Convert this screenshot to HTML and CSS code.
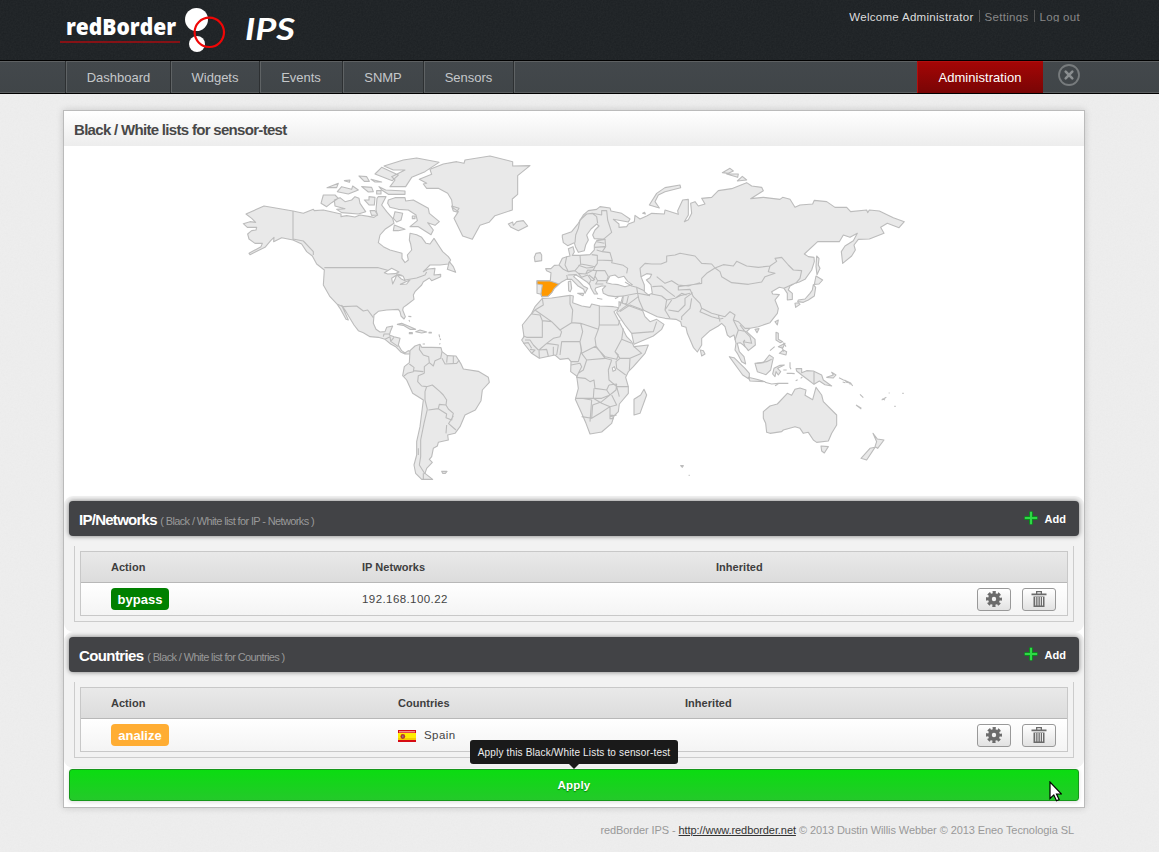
FILE: index.html
```html
<!DOCTYPE html>
<html lang="en">
<head>
<meta charset="utf-8">
<title>redBorder IPS</title>
<link rel="stylesheet" href="styles.css">
</head>
<body>
<svg class="defs" width="0" height="0" aria-hidden="true">
  <symbol id="gear" viewBox="0 0 16 16"><g fill="none" stroke="#6b6b6b"><circle cx="8" cy="8" r="4.100" stroke-width="3.800"/><circle cx="8" cy="8" r="6.600" stroke-width="2.800" stroke-dasharray="3.100 2.084" stroke-dashoffset="1.550"/></g></symbol>
  <symbol id="trash" viewBox="0 0 16 16"><path fill="#6b6b6b" fill-rule="evenodd" d="M5 0h6v2.500h4.500v1.700H.5V2.500H5zM6.300 1.300v1.200h3.400V1.300zM2.500 5.500h11V16h-11zM4.200 6v8.500h1V6zM6.500 6v8.500h1V6zM8.800 6v8.500h1V6zM11 6v8.500h1V6z"/></symbol>
  <symbol id="plus" viewBox="0 0 14 14"><path fill="#0c8a1e" d="M5 .5h4V5h4.500v4H9v4.500H5V9H.5V5H5z"/><path fill="#2fd846" d="M6 .8h2V6h5.200v2H8v5.200H6V8H.8V6H6z"/></symbol>
</svg>

<header class="header">
  <div class="header-inner">
    <svg class="logo" viewBox="0 0 250 60" width="250" height="60">
      <text x="6" y="34.500" class="logo-name" textLength="110" lengthAdjust="spacingAndGlyphs">redBorder</text>
      <path d="M0 42h120" stroke="#a80d10" stroke-width="1.700"/>
      <circle cx="136.500" cy="19.500" r="11.500" fill="#fff"/><circle cx="137" cy="44" r="8" fill="#fff"/>
      <circle cx="149.300" cy="32.300" r="14.700" fill="none" stroke="#f00606" stroke-width="2.200"/>
      <text x="185" y="39.500" class="logo-ips" textLength="50" lengthAdjust="spacingAndGlyphs">IPS</text>
    </svg>
    <div class="user-menu"><span class="welcome">Welcome Administrator</span><a class="menu-link">Settings</a><a class="menu-link logout">Log out</a></div>
  </div>
</header>
<nav class="nav">
  <div class="nav-inner">
    <a class="tab dashboard">Dashboard</a><a class="tab widgets">Widgets</a><a class="tab events">Events</a><a class="tab snmp">SNMP</a><a class="tab sensors">Sensors</a><span class="tab-end"></span>
    <a class="admin">Administration</a>
    <svg class="close" width="24" height="24" viewBox="0 0 24 24" fill="none"><circle cx="12" cy="12" r="10" stroke="#777b7d" stroke-width="1.800"/><path d="M8.700 8.700l6.600 6.600m0-6.600l-6.600 6.600" stroke="#8a8e90" stroke-width="2.600" stroke-linecap="round"/></svg>
  </div>
</nav>

<main class="panel">
  <h1 class="title">Black / White lists for sensor-test</h1>
  <svg class="map" viewBox="64 146 1020 350" width="1020" height="350">
    <!-- North America -->
    <g transform="translate(235 150) scale(.33333)">
      <path d="M33 192L87 168 174 183 205 190 235 178 238 182 265 180 318 192 318 200 335 197 360 201 375 195 405 200 417 202 427 195 423 180 426 145 430 140 453 140 440 165 455 185 473 205 477 220 465 228 450 238 435 255 430 278 445 290 465 300 501 310 501 325 510 338 520 330 517 315 530 300 527 282 523 270 525 250 545 254 560 262 573 280 585 282 597 265 610 285 623 305 640 320 647 330 640 342 615 345 585 345 575 355 565 365 580 357 600 355 597 375 617 373 617 380 590 392 583 384 577 388 565 395 560 405 540 425 535 435 537 448 515 465 505 472 503 480 511 500 507 507 498 498 495 485 490 478 455 480 430 484 417 495 415 520 423 538 435 546 450 545 455 532 473 528 467 542 463 555 477 560 495 565 490 585 500 602 510 609 520 602 528 604 525 612 510 612 497 606 482 590 467 582 450 568 430 562 405 560 385 548 370 542 357 525 342 500 330 480 320 466 340 510 333 508 315 475 307 463 285 440 265 405 268 360 245 342 232 318 215 305 200 282 174 270 140 263 116 275 117 262 107 272 90 292 45 314 42 310 78 290 82 280 60 280 42 267 38 252 50 242 63 240 65 232 37 232 25 221 45 215 62 217 50 205z"/>
      <path class="b" d="M174 183V270M174 267L205 273 235 305 235 315M268 353H430L455 360 480 370 500 376 510 390 545 384 570 375 575 366M307 463L325 470 365 468 385 483 398 480 415 503M445 560L447 552 463 552M450 568L465 560 467 574 490 590M467 574L477 562"/>
      <path d="M258 160L265 135 300 135 310 145 290 158 275 170zM298 150L315 143 330 155 350 150 360 140 372 145 375 160 392 185 370 192 320 188 305 178 330 176 300 168zM276 113L310 100 305 113zM307 125L320 110 350 118 353 108 370 120 340 132zM328 92L345 90 343 97zM372 78L395 80 403 94 388 94zM380 110L410 112 415 125 400 126zM408 88L440 96 420 96zM420 72L440 52 490 75 472 92zM447 48L505 30 545 24 612 37 570 65 530 82 512 110H465L480 90 470 80 510 60 475 60zM432 110L452 120 510 123 510 133 460 133 440 120zM388 150L402 150 402 140 420 142 418 165 402 165zM460 150L480 143 510 143 512 153 535 150 580 175 583 190 613 215 600 226 578 218 595 240 588 254 550 230 525 230 547 212 543 195 520 180 490 178 465 172 458 160zM480 185L503 190 498 210 485 216 475 205zM478 225L510 238 490 242 475 242zM425 122h13v10h-13zM405 182L420 182 428 195 410 196zM532 198h8v8h-8zM643 335L637 358 662 367 655 350z"/>
      <path class="sea" d="M448 368L470 355 492 366 480 371 458 372zM473 402L470 385 485 375 480 388zM485 374L505 379 510 392 499 387zM496 403L525 390 515 402z"/>
      <path d="M553 88L590 73 585 58 625 42 665 35 687 40 690 30 765 18 833 35 833 48 885 47 848 77 848 133 832 147 832 180 780 197 762 217 735 226 712 268 683 258 657 205 670 185 653 173 650 150 638 130 610 115 575 115 565 102 575 100zM650 168L672 175 665 186 655 183zM820 222L833 216 835 226 845 215 865 212 878 228 850 242 828 232z"/>
    </g>
    <!-- South America and the Caribbean -->
    <g transform="translate(370 310) scale(.33333)">
      <path d="M120 122L135 108 150 103 155 112 185 112 213 113 216 125 232 137 258 138 272 160 280 177 325 184 355 202 358 217 337 240 333 272 316 300 285 315 270 350 255 370 233 375 235 390 205 397 202 408 190 415 185 440 178 448 187 457 170 475 165 490 188 508 155 508 137 490 132 465 140 435 140 395 150 350 160 270 128 250 110 210 98 197 103 170 118 158z"/>
      <path class="b" d="M150 105L148 118 160 135 176 140 178 158 163 170 163 190M178 158L190 168 195 152 212 145 216 125M216 145L225 162 260 160 268 150M232 137L230 158M250 138V160M118 162L132 172 130 185 112 190 102 198M130 182L160 185M163 190L145 197 143 215 155 228 170 230 165 245 165 270 172 298M170 230L187 225 210 245 220 255 230 270 228 285 208 283 205 296 175 300M228 285L235 297 250 310 245 330 228 323 230 312 205 296M235 340L258 360M230 345L228 370M250 318L235 342M172 298L162 340 152 390 152 440 148 465 165 492M145 415v20M160 490v18"/>
      <path d="M82 43L95 40 120 50 137 58 120 58 100 46zM137 65L150 60 170 66 155 69zM118 68h9v3h-9zM177 67h7v2h-7zM115 19l9 1M117 30l2 5M207 73l2 9M210 85l2 5M208 103l3-3M158 102h7M215 484h16l-5 6h-8z"/>
    </g>
    <!-- Europe and Asia -->
    <g transform="translate(515 150) scale(.33333)">
      <path d="M142 262L142 255 170 245 190 220 205 195 220 182 245 178 255 170 285 174 288 183 320 190 345 207 340 216 295 208 312 222 312 232 335 230 340 222 358 215 360 196 375 207 395 198 410 190 448 192 450 180 490 193 488 182 503 150 520 148 520 195 508 215 520 209 530 190 527 160 540 155 550 168 570 162 560 145 590 142 610 122 650 116 695 98 710 108 740 112 745 122 707 146 745 142 795 148 803 142 825 148 840 172 855 165 893 162 898 151 935 155 960 172 995 172 1007 185 1055 180 1058 188 1063 180 1093 183 1135 203 1168 215 1152 233 1117 220 1097 232 1107 250 1063 267 1030 268 1017 285 1021 300 1010 318 983 340 979 305 990 288 1015 272 1027 250 1005 262 985 255 973 275 908 275 868 312 880 320 897 322 898 335 890 360 870 388 853 396 840 400 825 408 820 420 832 430 832 448 817 450 817 430 807 415 793 412 770 425 773 432 793 434 780 450 790 475 787 490 765 518 730 530 705 535 695 545 720 568 721 585 700 602 695 595 685 585 675 578 667 580 673 605 687 620 692 642 680 635 667 610 660 600 663 580 657 555 645 562 637 555 630 530 620 520 610 528 585 542 560 565 560 585 547 606 535 592 517 550 513 532 500 528 497 515 483 508 450 505 427 500 405 490 385 480 365 487 312 475 322 460 325 438 300 440 280 437 265 430 262 418 272 408 260 408 242 414 240 420 248 432 238 432 228 415 225 405 215 395 195 382 182 374 176 380 190 392 205 408 218 415 210 430 206 418 188 407 170 388 155 388 140 396 132 402 118 415 110 428 100 438 80 440 78 433 66 430 66 392 106 392 108 368 95 362 92 356 108 356 118 346 132 345 142 325 155 320 165 318 160 296 174 290 178 306 172 316 195 316 225 314 238 300 238 285 245 272 270 268 238 266 233 255 240 240 252 228 245 222 228 237 215 255 220 270 212 285 208 302 190 307 182 292 178 278 158 287 145 278z"/>
      <path class="spain" d="M66 393L105 393 132 402 118 415 110 428 100 438 80 440 78 430 82 405 66 402z"/>
      <path class="sea" d="M274 398L285 378 300 375 310 383 327 379 338 394 352 404 330 410 310 404 290 402zM378 380L395 371 410 373 405 383 394 390 408 405 412 430 400 435 388 425 388 405z"/>
      <path class="b" d="M180 278L182 255 190 235 195 210 215 192 232 190 245 200 248 220M232 190L260 195 260 182 275 182 278 210 290 247 265 268M270 268L272 290 262 305 245 300M245 275L268 280M238 292L270 290M195 316L197 342 215 345 240 350 247 340 247 316 230 314M247 330L292 332M262 305L285 308 292 332 290 338 325 346 338 355 335 370M155 320L150 345 160 365 180 362 197 342M132 345L145 358 160 365M180 362L190 370 212 372 235 360 240 350M155 375L158 388M158 375L185 374M190 346L215 354 235 352M190 370L200 382 218 375 228 390 222 402M212 372L218 360 245 362 240 378 235 392 228 390M245 362L270 362 280 380 275 392 248 392 240 378M248 392L242 402 265 402M222 375L240 390M330 396L350 408 365 412 368 430 325 438M365 412L388 422M368 430L372 450 385 480M340 438L335 460 322 465M368 430L405 437M410 432L440 438 455 450 450 480 465 505M455 450L480 445 495 437 525 430M412 410L440 408 460 425 480 440M425 380L450 400 470 392 490 405 520 408 555 398M378 380L375 355 390 340 410 342 438 342 455 335 455 318 480 315 495 310 540 318 560 340 590 342 600 354 575 370 560 385 560 400 525 405M600 354L625 344 655 348 665 334 695 348 730 352 765 348 785 334 780 325 800 322 820 345 835 360 860 362 855 385 842 400M600 354L615 365 620 380 650 398 700 403 740 396 750 380 780 370 760 365 765 348M807 415L835 402M525 405L490 410 490 420 525 418 535 440 555 460 560 475 590 490 630 500 645 485 660 495 655 510 670 515M533 428L510 445 510 465 490 485 460 480M530 445L525 475 500 500 500 510M560 475L555 485 590 500 615 507 625 505M610 495L615 515M470 450L450 480M480 445L500 430 515 435M655 510L670 540 660 570M670 515L690 535 705 535M675 525L690 545 705 560 710 580 685 575 690 590M670 540L695 545M685 575L690 570"/>
      <path d="M403 165L425 130 450 113 495 105 497 113 450 125 430 135 420 155 433 174zM383 190l6-3 2 5zM58 322L63 310 76 308 80 315 80 332 60 335zM160 395l7-2 3 22-4 10-5-3zM188 430l18 0-2 7zM246 445l16 3M300 446l10-5"/>
      <path d="M622 68L645 55 655 63 640 70zM635 72L670 72 668 82zM667 93L682 79 695 90zM905 318L912 325 910 345 915 355 906 374 903 350zM898 403L903 378 923 390 912 402zM895 404L902 412 898 438 880 450 865 457 848 455 850 450 870 447 885 430 892 420zM840 460L850 458 855 463 842 472z"/>
    </g>
    <!-- Africa and Arabia -->
    <g transform="translate(510 290) scale(.33333)">
      <path d="M97 25L125 24 180 16 190 18 188 38 215 48 240 52 245 42 270 48 310 50 320 52 327 55 312 65 325 90 335 110 350 140 365 155 372 170 415 165 405 190 370 230 355 245 347 262 355 290 355 310 328 342 325 365 312 378 305 400 275 426 240 432 228 400 215 370 196 328 205 295 200 258 182 245 183 215 175 205 150 208 135 195 88 205 65 190 45 165 35 150 42 140 37 105 65 70 75 50zM372 375L372 328 392 315 402 298 410 315 390 370z"/>
      <path d="M327 35L365 50 398 62 405 80 420 95 440 88 462 103 455 118 430 138 372 163 365 130 345 105 320 68 327 50z"/>
      <path class="b" d="M97 25L100 45 75 60 65 72 90 75 97 92 97 142 50 142 40 138M75 60L125 95 150 120 185 98 188 60 180 42 180 18M97 92L125 95M185 98L212 100 265 118 268 105 268 48M268 105H325L330 90M155 125L150 140 130 145 110 160 87 180 88 205M150 120L155 125M212 100L218 125 210 155 155 155 150 195M87 180L110 178 115 198M110 160L145 165 140 195M130 170V195M45 150L60 150 70 165 85 180M40 160L55 158 65 175M60 178L75 180 65 190M265 118L255 145 258 168 215 190 210 155M210 155L215 180 205 215 183 215M258 168L285 205 230 210 215 190M255 168L285 200 320 208 325 195 315 185 335 148 340 115M335 148L365 160M315 185L330 205 360 205 395 190 372 170M330 205L318 215 320 235 347 255M285 205L305 210 295 240 297 270 320 290 355 290M360 205L358 240M230 210L220 240 205 250 200 262 225 265 240 275 252 270 255 295 290 300 297 285M183 225L210 220 215 230 205 250M252 295L250 325 195 325M250 325L275 325 300 315 290 300M297 285L320 282 318 300 275 335 248 345 245 385 215 380M245 385L270 370 300 350 320 345 305 315M300 350L300 380 320 375M250 325L275 340 300 350M320 290L328 320M300 376h9v10h-9zM215 325L245 330 240 395M325 65L385 20M365 130L430 125 440 95M330 65L360 45 400 60M338 20L330 48"/>
      <path class="sea" d="M307 234l6-4 4 10-8 4z"/>
    </g>
    <!-- South-east Asia and Oceania -->
    <g transform="translate(650 290) scale(.33333)">
      <path d="M340 365L360 348 382 342 412 310 425 316 435 298 450 294 468 300 465 316 488 329 498 292 515 315 520 335 560 375 560 405 545 430 535 453 500 457 490 450 475 427 460 430 450 415 435 410 400 420 395 425 360 430 350 427 347 400 340 385zM513 468L535 470 523 489 515 483zM669 430L682 447 702 450 683 475 675 470 680 455zM633 505L660 475 675 472 650 510z"/>
      <path d="M238 200L252 203 285 235 298 250 298 268 278 255zM295 262L320 268 345 275 300 273zM315 220L340 218 358 195 370 203 362 240 348 254 322 245zM372 235L390 226 403 225 383 235 392 245 385 255 378 245 375 260 368 252zM378 127L385 130 385 148 398 155 390 158 378 150zM385 170L405 160 398 175zM388 190L400 180 410 185 408 195zM375 95L385 90 382 105zM151 180L160 182 165 192 155 198zM315 118l12-2-6 12zM438 236L455 236 455 248 470 242 490 243 515 255 520 270 545 288 525 284 508 273 492 283 475 270 455 255 440 243zM530 262L550 255 545 247 558 255 550 264z"/>
      <path class="b" d="M492 245V282M320 220L350 215 365 208M360 182l14-12M345 277l20 5 20-2 30 0M375 287l10-5M400 240h10M420 217v15l3 6M410 250h14l10 1M437 272l6-3M452 265l5-4M567 263l12 6 8 3 15 7 6 9M578 276l8 2M585 270l4 7 10 2 2 5M630 313l10 10M618 345l16 10M620 347l14 10M695 330l14-8M697 326l8 4M716 309h3M757 310h4M733 349h4M92 527h8l-3 5zM116 556h3M400 158l8 12M395 170l6 15"/>
    </g>
  </svg>

  <section class="block">
    <div class="bar"><h2 class="bar-title">IP/Networks <small class="bar-note">( Black / White list for IP - Networks )</small></h2><a class="add"><svg width="14" height="14"><use href="#plus"/></svg>Add</a></div>
    <div class="frame"><div class="table nets">
      <div class="row head"><span>Action</span><span>IP Networks</span><span>Inherited</span></div>
      <div class="row"><span><b class="tag bypass">bypass</b></span><span class="value">192.168.100.22</span><span></span><span class="tools"><button class="tool"><svg width="16" height="16"><use href="#gear"/></svg></button><button class="tool"><svg width="16" height="16"><use href="#trash"/></svg></button></span></div>
    </div></div>
  </section>
  <section class="block">
    <div class="bar"><h2 class="bar-title countries-title">Countries <small class="bar-note">( Black / White list for Countries )</small></h2><a class="add"><svg width="14" height="14"><use href="#plus"/></svg>Add</a></div>
    <div class="frame"><div class="table lands">
      <div class="row head"><span>Action</span><span>Countries</span><span>Inherited</span></div>
      <div class="row"><span><b class="tag analize">analize</b></span><span class="value country"><svg width="18" height="12" viewBox="0 0 18 12"><path fill="#d60b12" d="M0 0h18v12H0z"/><path fill="#f08a85" d="M1 1h16v1.500H1z"/><path fill="#ffed00" d="M0 3h18v7H0z"/><path fill="#f7c900" d="M0 8h18v2H0z"/><circle cx="4.800" cy="6.500" r="2.400" fill="#b8342c"/><path fill="#8a7a9a" d="M4 5.500h1.500v2H4z"/></svg>Spain</span><span></span><span class="tools"><button class="tool"><svg width="16" height="16"><use href="#gear"/></svg></button><button class="tool"><svg width="16" height="16"><use href="#trash"/></svg></button></span></div>
    </div></div>
  </section>
  <div class="apply">Apply
    <div class="tooltip">Apply this Black/White Lists to sensor-test</div>
    <svg class="cursor" width="13" height="21" viewBox="0 0 13 21"><path d="M1 1v16.500l3.800-3.600 2.700 5.800 2.600-1.200-2.600-5.500h5z" fill="#fff" stroke="#000" stroke-width="1.200"/></svg>
  </div>
</main>
<footer class="footer">redBorder IPS - <a class="site">http://www.redborder.net</a> © 2013 Dustin Willis Webber © 2013 Eneo Tecnologia SL</footer>
</body>
</html>
```

FILE: styles.css
```css
* { box-sizing: border-box; }
body {
  margin: 0;
  min-height: 852px;
  font-family: "Liberation Sans", Arial, sans-serif;
  font-size: 12px;
  color: #444;
  background: #eeeeee url("data:image/svg+xml,%3Csvg xmlns='http://www.w3.org/2000/svg' width='150' height='150'%3E%3Cfilter id='n'%3E%3CfeTurbulence type='fractalNoise' baseFrequency='.6' numOctaves='2' stitchTiles='stitch'/%3E%3CfeColorMatrix type='saturate' values='0'/%3E%3C/filter%3E%3Crect width='150' height='150' filter='url(%23n)' opacity='.06'/%3E%3C/svg%3E");
}
.defs { position: absolute; }
.header {
  height: 60px;
  background: #1c2023 url("data:image/svg+xml,%3Csvg xmlns='http://www.w3.org/2000/svg' width='150' height='150'%3E%3Cfilter id='n'%3E%3CfeTurbulence type='fractalNoise' baseFrequency='.6' numOctaves='2' stitchTiles='stitch'/%3E%3CfeColorMatrix type='saturate' values='0'/%3E%3C/filter%3E%3Crect width='150' height='150' filter='url(%23n)' opacity='.06'/%3E%3C/svg%3E");
}
.header-inner { display: flex; justify-content: space-between; width: 1020px; margin-left: 60px; }
.logo { display: block; }
.logo-name { font: 800 22px "Open Sans", sans-serif; fill: #fff; }
.logo-ips { font: italic 700 30px Lato, sans-serif; fill: #fff; }
.user-menu { display: flex; height: 22px; padding-top: 10px; line-height: 14px; font-size: 11.5px; letter-spacing: .3px; overflow: hidden; white-space: nowrap; }
.welcome { color: #ddd; padding-right: 5px; }
.menu-link { color: #888; border-left: 1px solid #555; padding: 0 5px; }
.logout { padding-right: 0; }

.nav { height: 34px; border-top: 1px solid #000; border-bottom: 1px solid #000; background: linear-gradient(#43484c, #404548); box-shadow: inset 0 1px #5e6163, inset 0 -1px #5a5d5f; }
.nav-inner { display: flex; width: 1021px; margin-left: 65px; line-height: 33px; font-size: 13px; color: #c5c8ca; }
.tab { height: 32px; border-left: 1px solid #2d3032; box-shadow: inset 1px 0 #5f6365; text-align: center; }
.dashboard { width: 105px; padding-left: 1px; }
.widgets { width: 89px; }
.events { width: 83px; }
.snmp { width: 81px; }
.sensors { width: 90px; }
.tab-end { height: 32px; border-left: 1px solid #2d3032; border-right: 1px solid #5f6365; }
.admin { margin-left: auto; width: 126px; height: 32px; text-align: center; letter-spacing: .05px; background: linear-gradient(#a50606, #790505); color: #fff; box-shadow: inset 1px 1px #b01010; }
.close { margin: 2px 5px 0 14px; }

.panel { width: 1022px; margin: 16px 0 0 63px; height: 698px; background: #fff; border: 1px solid #bbb; box-shadow: 0 0 7px rgba(0,0,0,.16); }
.title { margin: 0; height: 35px; padding-left: 10px; line-height: 38px; font-size: 15px; letter-spacing: -.69px; color: #484848; background: linear-gradient(#fff, #ededed); }
.map { display: block; }
.map path { fill: #e9e9e9; stroke: #bcbcbc; stroke-width: 1.1px; vector-effect: non-scaling-stroke; stroke-linejoin: round; }
.map .b { fill: none; }
.map .sea { fill: #fff; }
.map .spain { fill: #ff9900; }

.block { height: 136px; padding: 5px; background: #f2f2f2; border-radius: 9px; }
.bar { display: flex; justify-content: space-between; height: 35px; padding: 0 13px 0 10px; border-radius: 4px; background: #424346; box-shadow: 0 0 5px rgba(0,0,0,.5); color: #fff; line-height: 37px; }
.bar-title { margin: 0; font-size: 15px; letter-spacing: -.73px; }
.countries-title { letter-spacing: -.6px; }
.bar-note { font-size: 11px; font-weight: 400; color: #999; letter-spacing: -.63px; }
.add { display: flex; gap: 7px; font-size: 11px; font-weight: 700; }
.add svg { margin: 10px 0 0 -1px; }
.frame { margin: 10px 5px 0; height: 76px; padding: 5px; border: 1px solid #ccc; border-top: 0; }
.table { height: 65px; border: 1px solid #c8c8c8; background: #fff; }
.row { display: grid; align-items: center; height: 32px; padding: 0 11px 0 30px; background: linear-gradient(#fff, #f4f4f4); }
.nets .row { grid-template-columns: 251px 354px 1fr auto; }
.lands .row { grid-template-columns: 287px 287px 1fr auto; }
.row.head { height: 31px; border-bottom: 1px solid #b8b8b8; background: linear-gradient(#e9e9e9, #dcdcdc); font-size: 11px; font-weight: 700; color: #3e3e3e; letter-spacing: .03px; }
.value { font-size: 11.5px; letter-spacing: .42px; }
.country { display: flex; align-items: center; gap: 8px; }
.country svg { margin-top: 1px; }
.tag { display: block; width: 58px; height: 22px; border-radius: 4px; color: #fff; font-size: 13px; line-height: 23px; text-align: center; }
.bypass { background: #008000; }
.analize { background: #ffad33; }
.tools { display: flex; gap: 11px; }
.tool { display: flex; justify-content: center; align-items: center; width: 34px; height: 23px; padding: 0; border: 1px solid #999; border-radius: 3px; background: linear-gradient(#fff, #e2e2e2); }
.apply { position: relative; margin: 1px 5px 0; height: 32px; border: 1px solid #16971a; border-radius: 3px; background: linear-gradient(#0bdc11, #24c92a); box-shadow: 0 1px 4px rgba(0,0,0,.15); color: #fff; font-size: 11.5px; font-weight: 700; line-height: 31px; text-align: center; letter-spacing: .2px; text-shadow: 0 1px 1px #087a0b; }
.tooltip { position: absolute; left: 400px; top: -30px; width: 208px; height: 24px; border-radius: 3px; background: #1a1a1a; color: #eee; font-size: 10px; font-weight: 400; line-height: 25px; letter-spacing: .16px; text-shadow: none; white-space: nowrap; }
.tooltip::after { content: ""; position: absolute; left: 99px; top: 24px; border: 5px solid transparent; border-top-color: #1a1a1a; border-bottom: 0; }
.cursor { position: absolute; left: 979px; top: 11px; }
.footer { margin: 15px 85px 0 0; text-align: right; font-size: 11px; line-height: 14px; letter-spacing: -.08px; color: #999; }
.site { color: #333; text-decoration: underline; }
```
